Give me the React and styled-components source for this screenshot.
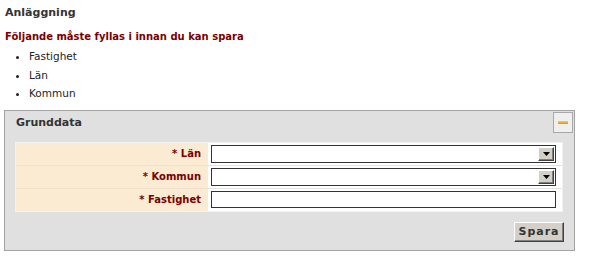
import { Fragment } from 'react';
import styled, { createGlobalStyle } from 'styled-components';

const GlobalStyle = createGlobalStyle`
  html, body {
    margin: 0;
    padding: 0;
    background: #ffffff;
  }
  body {
    font-family: Verdana, "DejaVu Sans", sans-serif;
    font-size: 11px;
    color: #333333;
  }
`;

const Page = styled.div`
  width: 591px;
  height: 266px;
  box-sizing: border-box;
  padding: 4px 16px 0 4px;
`;

const Title = styled.h1`
  margin: 0 0 0 1px;
  font-size: 11px;
  line-height: 18px;
  font-weight: bold;
  color: #333333;
`;

const Warning = styled.p`
  margin: 7px 0 0 1px;
  font-size: 10px;
  line-height: 16px;
  font-weight: bold;
  color: #7a0000;
`;

const MissingList = styled.ul`
  margin: 2px 0 7px 0;
  padding: 0 0 0 25px;
  list-style: disc;
`;

const MissingItem = styled.li`
  font-size: 10.5px;
  line-height: 18.5px;
  color: #222222;
`;

const Panel = styled.section`
  border: 1px solid #a3a3a3;
  background: #e0e0e0;
  padding: 1px 1px 8px 10px;
`;

const PanelHeader = styled.div`
  display: flex;
  justify-content: space-between;
  align-items: flex-start;
  height: 21px;
`;

const PanelTitle = styled.h2`
  margin: 3px 0 0 1px;
  font-size: 11px;
  line-height: 16px;
  font-weight: bold;
  color: #333333;
`;

const CollapseButton = styled.button`
  display: flex;
  align-items: center;
  justify-content: center;
  width: 20px;
  height: 21px;
  padding: 0;
  border: 1px solid #a8a8a8;
  background: #efefef;
  cursor: pointer;
`;

const MinusBar = styled.span`
  display: block;
  width: 10px;
  height: 3px;
  background: linear-gradient(#f6cf57, #d9960f);
`;

const FormTable = styled.div`
  display: grid;
  grid-template-columns: 192px 1fr;
  margin: 9px 10px 0 0;
  border: 1px solid #f2f2f2;
  background: #ffffff;
`;

const LabelCell = styled.div`
  display: flex;
  align-items: center;
  justify-content: flex-end;
  height: 22px;
  padding-right: 7px;
  background: #faebd2;
  border-top: ${({ $first }) => ($first ? 'none' : '1px solid #efe2cc')};
  font-size: 10px;
  font-weight: bold;
  color: #7a0000;
`;

const FieldCell = styled.div`
  display: flex;
  align-items: center;
  height: 22px;
  padding: 0 6px 0 3px;
  border-top: ${({ $first }) => ($first ? 'none' : '1px solid #e2e2e2')};
`;

const SelectBox = styled.div`
  display: flex;
  align-items: center;
  width: 100%;
  height: 18px;
  box-sizing: border-box;
  border: 1px solid #333333;
  background: #ffffff;
  padding-right: 1px;
`;

const SelectField = styled.select`
  flex: 1;
  height: 100%;
  border: none;
  background: transparent;
  appearance: none;
  outline: none;
  font-family: inherit;
  font-size: 10px;
`;

const ArrowButton = styled.span`
  display: flex;
  align-items: center;
  justify-content: center;
  width: 16px;
  height: 14px;
  box-sizing: border-box;
  background: #d4d0c8;
  border: 1px solid;
  border-color: #ffffff #404040 #404040 #ffffff;
  box-shadow: inset -1px -1px 0 #808080;
`;

const TextField = styled.input`
  width: 100%;
  height: 17px;
  box-sizing: border-box;
  border: 1px solid #333333;
  padding: 0 2px;
  font-family: inherit;
  font-size: 10px;
  outline: none;
`;

const Footer = styled.div`
  display: flex;
  justify-content: flex-end;
  margin: 10px 9px 0 0;
`;

const SaveButton = styled.button`
  width: 50px;
  height: 20px;
  padding: 0;
  background: #d4d0c8;
  border: 1px solid;
  border-color: #ffffff #404040 #404040 #ffffff;
  box-shadow: inset -1px -1px 0 #808080;
  font-family: inherit;
  font-size: 11px;
  font-weight: bold;
  letter-spacing: 1px;
  color: #333333;
  cursor: pointer;
`;

const Dropdown = () => (
  <SelectBox>
    <SelectField>
      <option value=""></option>
    </SelectField>
    <ArrowButton>
      <svg width="7" height="4" viewBox="0 0 7 4">
        <path d="M0 0h7L3.5 4z" fill="#000" />
      </svg>
    </ArrowButton>
  </SelectBox>
);

const fields = [
  { label: '* Län', kind: 'select' },
  { label: '* Kommun', kind: 'select' },
  { label: '* Fastighet', kind: 'text' },
];

const App = () => (
  <>
    <GlobalStyle />
    <Page>
      <Title>Anläggning</Title>
      <Warning>Följande måste fyllas i innan du kan spara</Warning>
      <MissingList>
        <MissingItem>Fastighet</MissingItem>
        <MissingItem>Län</MissingItem>
        <MissingItem>Kommun</MissingItem>
      </MissingList>
      <Panel>
        <PanelHeader>
          <PanelTitle>Grunddata</PanelTitle>
          <CollapseButton aria-label="Minimera">
            <MinusBar />
          </CollapseButton>
        </PanelHeader>
        <FormTable>
          {fields.map((f, i) => (
            <Fragment key={f.label}>
              <LabelCell $first={i === 0}>{f.label}</LabelCell>
              <FieldCell $first={i === 0}>
                {f.kind === 'select' ? <Dropdown /> : <TextField type="text" />}
              </FieldCell>
            </Fragment>
          ))}
        </FormTable>
        <Footer>
          <SaveButton>Spara</SaveButton>
        </Footer>
      </Panel>
    </Page>
  </>
);

export default App;
